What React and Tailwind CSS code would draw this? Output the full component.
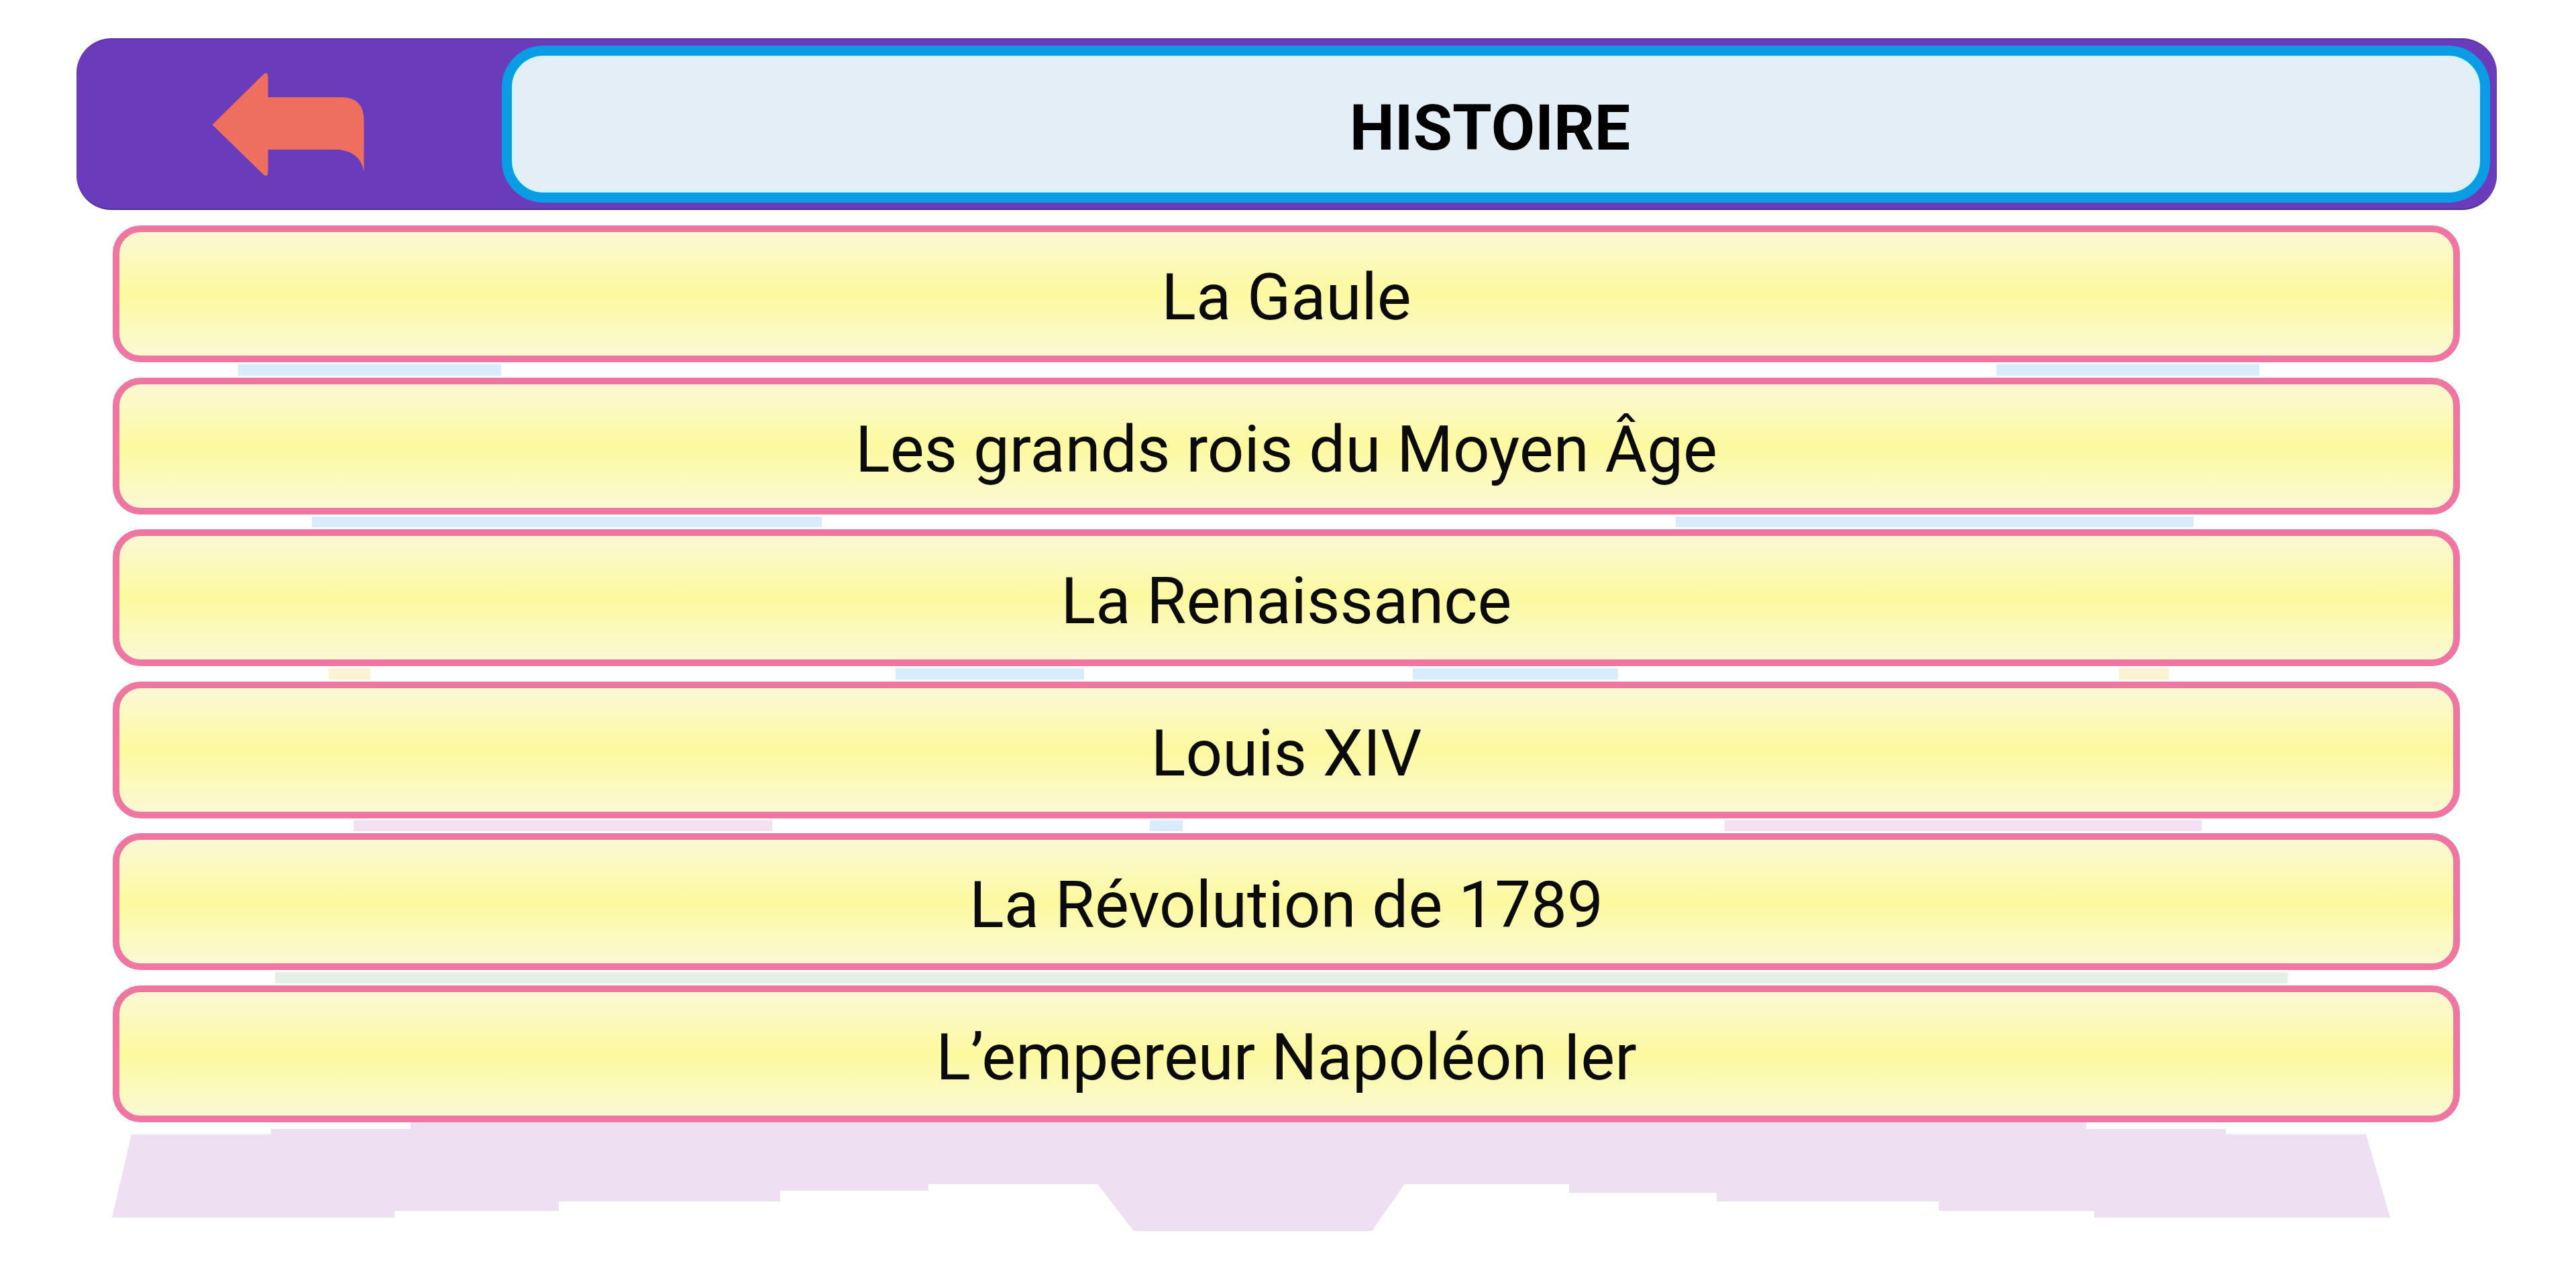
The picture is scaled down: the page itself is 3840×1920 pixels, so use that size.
const topics = [
  "La Gaule",
  "Les grands rois du Moyen Âge",
  "La Renaissance",
  "Louis XIV",
  "La Révolution de 1789",
  "L’empereur Napoléon Ier",
];

// faint pieces of the background picture that show between the rows
const gapBits = [
  [
    { left: 187, width: 392, color: "bg-[#d9ecfc]" },
    { left: 2808, width: 392, color: "bg-[#d9ecfc]" },
  ],
  [
    { left: 297, width: 760, color: "bg-[#d9ecfc]" },
    { left: 2330, width: 772, color: "bg-[#d9ecfc]" },
  ],
  [
    { left: 322, width: 62, color: "bg-[#fbf3d2]" },
    { left: 1167, width: 281, color: "bg-[#d9ecfc]" },
    { left: 1938, width: 306, color: "bg-[#d9ecfc]" },
    { left: 2991, width: 74, color: "bg-[#fbf3d2]" },
  ],
  [
    { left: 359, width: 624, color: "bg-[#f3e1f3]" },
    { left: 1546, width: 49, color: "bg-[#d9ecfc]" },
    { left: 2403, width: 711, color: "bg-[#f3e1f3]" },
  ],
  [
    { left: 242, width: 3000, color: "bg-[#e4f0e7]" },
  ],
];

const BackArrow = () => (
  <svg width="232" height="158" viewBox="-1 -2 229 158" className="block">
    <path
      d="M 1 78 L 77 3 Q 84 -3 84 7 L 84 37 L 194 37 Q 227 37 227 72 L 227 148 Q 222 118 189 115 L 84 115 L 84 147 Q 84 158 77 152 Z"
      fill="#ee6f5f"
    />
  </svg>
);

const TopicRow = ({ label }) => (
  <button className="h-[204px] w-full rounded-[42px] border-[10px] border-[#ee76a0] bg-linear-to-b from-[#fbf8d4] via-[#fcf99f] to-[#fbf9d3] flex items-center justify-center pt-[10px]">
    <span className="text-[96px] leading-none text-[#0b0b0b] font-['Roboto','Liberation_Sans',sans-serif]">
      {label}
    </span>
  </button>
);

const GapStrip = ({ bits }) => (
  <div className="relative h-[22.6px] w-full">
    {bits.map((b) => (
      <div
        key={b.left}
        className={`absolute top-[3px] bottom-[3px] ${b.color}`}
        style={{ left: b.left, width: b.width }}
      />
    ))}
  </div>
);

export default function App() {
  return (
    <div className="w-[3840px] h-[1920px] bg-white overflow-hidden font-['Roboto','Liberation_Sans',sans-serif]">
      {/* Header */}
      <div className="ml-[114px] mt-[57px] w-[3608px] h-[256px] rounded-[52px] bg-[#6a3cbb] border-t-2 border-b-2 border-t-[#5b31a4] border-b-[#4f2c95] flex items-center pr-[10px]">
        <div className="w-[634px] h-full flex items-center justify-center pr-[4px]">
          <BackArrow />
        </div>
        <div className="flex-1 h-[234px] rounded-[62px] border-[15px] border-[#0a9de6] bg-[#e4eef6] shadow-[inset_0_0_0_3px_#c9f6ff] flex items-center justify-center pt-[10px] pr-[18px]">
          <span className="text-[95px] leading-none font-bold text-black">
            HISTOIRE
          </span>
        </div>
      </div>

      {/* Topics */}
      <div className="ml-[168px] mt-[23px] w-[3499px] flex flex-col">
        {topics.map((t, i) => (
          <div key={t}>
            <TopicRow label={t} />
            {i < gapBits.length && <GapStrip bits={gapBits[i]} />}
          </div>
        ))}
      </div>

      {/* faded silhouette under the list */}
      <svg width="3840" height="170" viewBox="0 0 3840 170" className="block">
        <polygon
          fill="#efdff3"
          points="196,18 404,18 404,10 612,10 612,0 3110,0 3110,10 3318,10 3318,18 3527,18 3563,142 3122,142 3122,132 2890,132 2890,118 2559,118 2559,105 2339,105 2339,92 2094,92 2045,162 1690,162 1636,92 1384,92 1384,102 1163,102 1163,118 833,118 833,132 588,132 588,142 167,142"
        />
      </svg>
    </div>
  );
}
